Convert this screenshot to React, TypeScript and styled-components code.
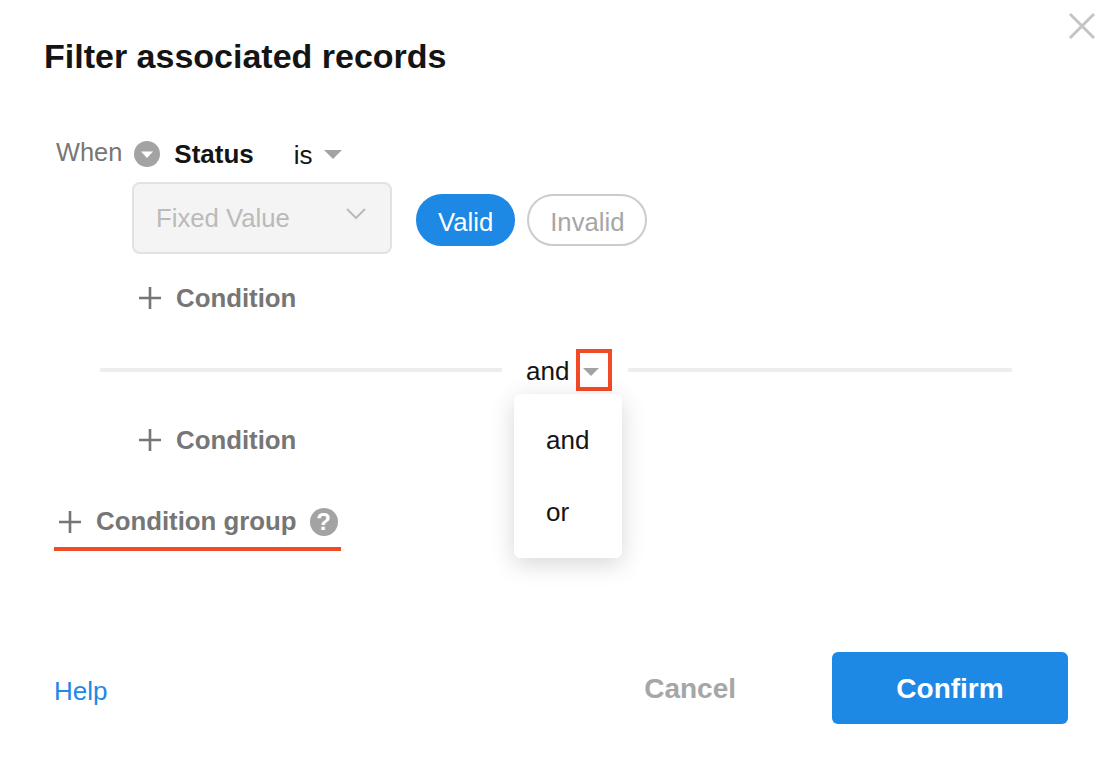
import React from 'react'
import styled, { createGlobalStyle } from 'styled-components'

const GlobalStyle = createGlobalStyle`
  html, body {
    margin: 0;
    padding: 0;
    background: #fff;
  }
  body {
    font-family: "Liberation Sans", Arial, sans-serif;
  }
`

const Dialog = styled.div`
  position: relative;
  box-sizing: border-box;
  width: 1114px;
  height: 760px;
  padding: 37px 46px 36px 44px;
  display: flex;
  flex-direction: column;
  background: #fff;
  overflow: hidden;
`

const Title = styled.h1`
  margin: 0;
  font-size: 34px;
  line-height: 38px;
  font-weight: 700;
  color: #141414;
`

const CloseButton = styled.button`
  position: absolute;
  top: 12px;
  right: 18px;
  width: 28px;
  height: 28px;
  padding: 0;
  border: none;
  background: none;
  color: #c4c4c4;
`

const Body = styled.div`
  display: flex;
  flex-direction: column;
  padding-top: 57px;
  flex: 1;
`

const WhenRow = styled.div`
  display: flex;
  align-items: center;
  height: 44px;
  padding-left: 12px;
`

const WhenLabel = styled.span`
  font-size: 25.4px;
  color: #767676;
  margin-right: 12px;
  position: relative;
  top: -2px;
`

const FieldName = styled.span`
  font-size: 26px;
  font-weight: 700;
  color: #141414;
  margin: 0 40px 0 14px;
`

const Operator = styled.span`
  font-size: 26px;
  color: #141414;
  margin-right: 11px;
  position: relative;
  top: 1px;
`

const Caret = styled.span`
  display: inline-block;
  width: 0;
  height: 0;
  border-left: 9px solid transparent;
  border-right: 9px solid transparent;
  border-top: 9px solid #a3a3a3;
`

const SmallCaret = styled(Caret)`
  border-left-width: 8px;
  border-right-width: 8px;
  border-top-width: 8px;
`

const ValueRow = styled.div`
  display: flex;
  align-items: center;
  gap: 12px;
  margin: 6px 0 0 88px;
`

const FixedSelect = styled.div`
  box-sizing: border-box;
  width: 260px;
  height: 72px;
  margin-right: 12px;
  padding: 0 24px 0 22px;
  display: flex;
  align-items: center;
  justify-content: space-between;
  background: #f4f4f4;
  border: 2px solid #e2e2e2;
  border-radius: 8px;
  font-size: 25.7px;
  color: #bababa;
  svg {
    position: relative;
    top: -4px;
  }
`

const Pill = styled.span<{ $active?: boolean }>`
  box-sizing: border-box;
  height: 52px;
  margin-top: 4px;
  padding: 4px ${(p) => (p.$active ? 20 : 21)}px 0;
  display: inline-flex;
  align-items: center;
  border-radius: 26px;
  font-size: 25.7px;
  border: 2px solid ${(p) => (p.$active ? '#1e88e5' : '#cccccc')};
  background: ${(p) => (p.$active ? '#1e88e5' : '#fff')};
  color: ${(p) => (p.$active ? '#fff' : '#a6a6a6')};
`

const AddRow = styled.div`
  display: flex;
  align-items: center;
  gap: 14px;
  height: 44px;
  margin-left: 94px;
  font-size: 25.8px;
  font-weight: 700;
  color: #767676;
`

const ConditionRow = styled(AddRow)`
  margin-top: 22px;
`

const Divider = styled.div`
  position: relative;
  display: flex;
  align-items: center;
  height: 42px;
  margin: 29px 56px 5px 56px;
`

const DividerLine = styled.div<{ $width?: number }>`
  flex: ${(p) => (p.$width ? `0 0 ${p.$width}px` : 1)};
  height: 4px;
  background: #ededed;
`

const LogicPicker = styled.div`
  display: flex;
  align-items: center;
  margin: 0 16px 0 24px;
  font-size: 26px;
  color: #141414;
  gap: 7px;
`

const LogicLabel = styled.span`
  padding-top: 2px;
`

const CaretBox = styled.span`
  box-sizing: border-box;
  width: 36px;
  height: 42px;
  padding: 3px 0 0 3px;
  display: flex;
  align-items: center;
  justify-content: flex-start;
  border: 4px solid #f24a24;
`

const Menu = styled.ul`
  position: absolute;
  top: 45px;
  left: 414px;
  width: 108px;
  height: 164px;
  box-sizing: border-box;
  margin: 0;
  padding: 10px 0;
  list-style: none;
  background: #fff;
  border-radius: 6px;
  box-shadow: 0 6px 24px rgba(0, 0, 0, 0.16);
`

const MenuItem = styled.li`
  height: 72px;
  padding-left: 32px;
  display: flex;
  align-items: center;
  font-size: 26px;
  color: #141414;
`

const GroupWrap = styled.div`
  align-self: flex-start;
  box-sizing: border-box;
  display: flex;
  align-items: center;
  gap: 14px;
  width: 287px;
  height: 51px;
  margin: 38px 0 0 10px;
  padding: 0 0 4px 4px;
  border-bottom: 4px solid #f24a24;
  font-size: 25.8px;
  font-weight: 700;
  color: #767676;
`

const HelpBadge = styled.span`
  width: 28px;
  height: 28px;
  margin-left: -1px;
  border-radius: 50%;
  background: #a3a3a3;
  color: #fff;
  font-size: 24px;
  font-weight: 700;
  display: inline-flex;
  align-items: center;
  justify-content: center;
`

const Footer = styled.div`
  display: flex;
  align-items: center;
  height: 72px;
  padding-left: 10px;
`

const HelpLink = styled.a`
  font-size: 26px;
  color: #1e88e5;
  margin-right: auto;
  position: relative;
  top: 3px;
`

const CancelButton = styled.button`
  border: none;
  background: none;
  padding: 2px 0 0;
  margin-right: 96px;
  font-family: inherit;
  font-size: 28px;
  line-height: 34px;
  font-weight: 700;
  color: #a6a6a6;
`

const ConfirmButton = styled.button`
  width: 236px;
  height: 72px;
  padding: 1px 0 0;
  border: none;
  border-radius: 6px;
  background: #1e88e5;
  color: #fff;
  font-family: inherit;
  font-size: 28px;
  font-weight: 700;
`

const PlusIcon = () => (
  <svg width="24" height="24" viewBox="0 0 24 24" fill="none" stroke="currentColor" strokeWidth="2.6">
    <path d="M12 1v22M1 12h22" />
  </svg>
)

const WhenDropIcon = () => (
  <svg width="26" height="26" viewBox="0 0 26 26">
    <circle cx="13" cy="13" r="13" fill="#a3a3a3" />
    <path d="M7 10.5h12l-6 6.5z" fill="#fff" />
  </svg>
)

const App = () => {
  return (
    <Dialog>
      <GlobalStyle />
      <Title>Filter associated records</Title>
      <CloseButton aria-label="Close">
        <svg width="28" height="28" viewBox="0 0 28 28" stroke="currentColor" strokeWidth="3" fill="none">
          <path d="M2 2l24 24M26 2L2 26" />
        </svg>
      </CloseButton>

      <Body>
        <WhenRow>
          <WhenLabel>When</WhenLabel>
          <WhenDropIcon />
          <FieldName>Status</FieldName>
          <Operator>is</Operator>
          <Caret />
        </WhenRow>
        <ValueRow>
          <FixedSelect>
            Fixed Value
            <svg width="20" height="12" viewBox="0 0 20 12" fill="none" stroke="#bababa" strokeWidth="2">
              <path d="M1 1l9 9 9-9" />
            </svg>
          </FixedSelect>
          <Pill $active>Valid</Pill>
          <Pill>Invalid</Pill>
        </ValueRow>
        <ConditionRow>
          <PlusIcon />
          Condition
        </ConditionRow>

        <Divider>
          <DividerLine $width={402} />
          <LogicPicker>
            <LogicLabel>and</LogicLabel>
            <CaretBox>
              <SmallCaret />
            </CaretBox>
          </LogicPicker>
          <DividerLine />
          <Menu>
            <MenuItem>and</MenuItem>
            <MenuItem>or</MenuItem>
          </Menu>
        </Divider>

        <ConditionRow>
          <PlusIcon />
          Condition
        </ConditionRow>

        <GroupWrap>
          <PlusIcon />
          Condition group
          <HelpBadge>?</HelpBadge>
        </GroupWrap>
      </Body>

      <Footer>
        <HelpLink>Help</HelpLink>
        <CancelButton>Cancel</CancelButton>
        <ConfirmButton>Confirm</ConfirmButton>
      </Footer>
    </Dialog>
  )
}

export default App
